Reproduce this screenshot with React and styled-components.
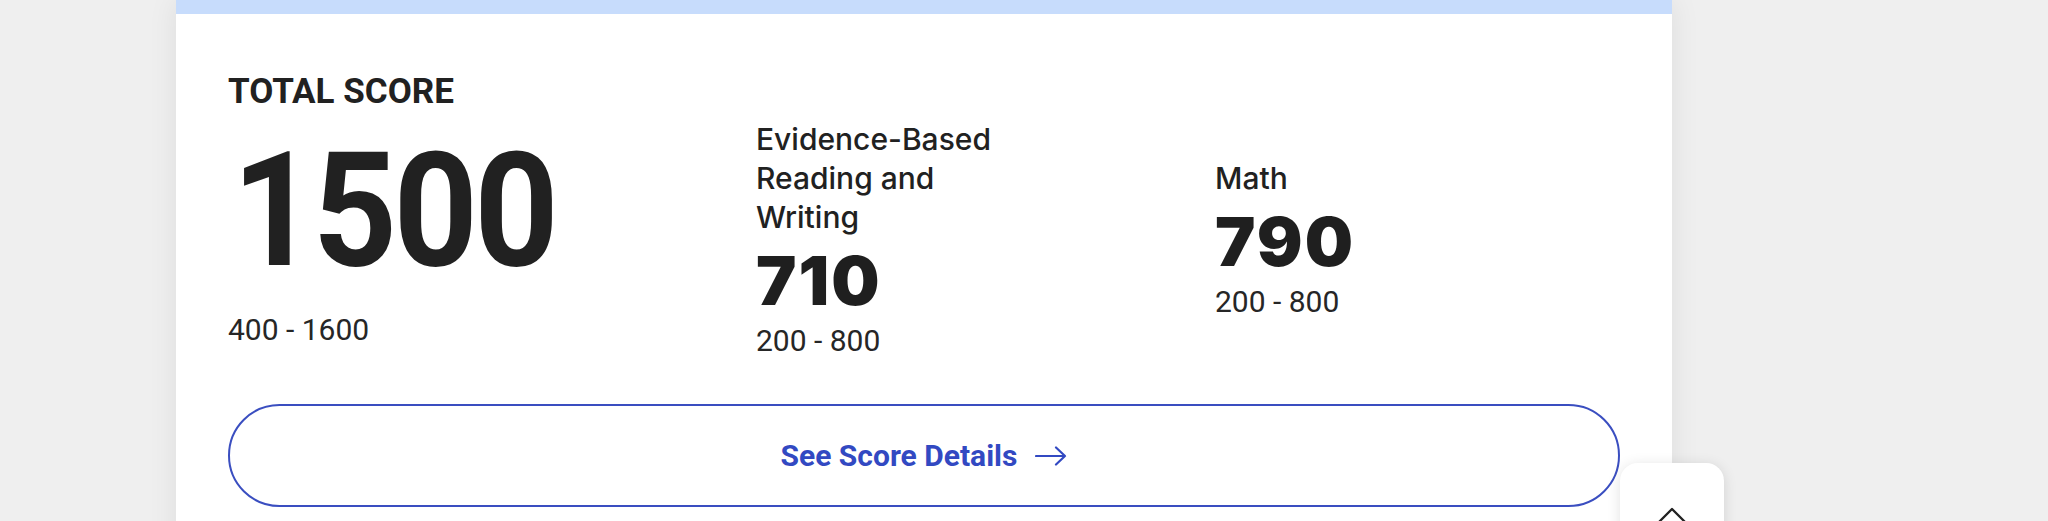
import React from 'react'
import styled, { createGlobalStyle } from 'styled-components';

const GlobalStyle = createGlobalStyle`
  html, body {
    margin: 0;
    padding: 0;
    background: #efefef;
    overflow: hidden;
  }
  body {
    font-family: Roboto, "Liberation Sans", sans-serif;
    color: #212121;
  }
`;

const Page = styled.div`
  height: 521px;
  padding-left: 176px;
  overflow: hidden;
`;

const Card = styled.section`
  width: 1496px;
  min-height: 600px;
  background: #ffffff;
  box-shadow: 0 0 28px rgba(0, 0, 0, 0.08);
`;

const Stripe = styled.div`
  height: 14px;
  background: #c7dcfc;
`;

const Body = styled.div`
  padding: 58px 52px 40px;
`;

const Heading = styled.h2`
  margin: 0;
  font-family: Roboto, sans-serif;
  font-weight: 700;
  font-size: 35px;
  line-height: 40px;
  color: #212121;
`;

const ScoresRow = styled.div`
  display: grid;
  grid-template-columns: 528px 459px 1fr;
  align-items: center;
  margin-top: 8px;
`;

const Column = styled.div`
  display: flex;
  flex-direction: column;
  align-items: flex-start;
  max-width: ${(props) => props.$narrow ? '262px' : 'none'};
`;

// the big number is set a little narrower than plain Roboto Bold
const TotalValue = styled.div`
  font-family: Roboto, sans-serif;
  font-weight: 700;
  font-size: 160px;
  line-height: 160px;
  letter-spacing: -4px;
  margin-left: 4px;
  transform: scaleX(0.92);
  transform-origin: left center;
  color: #212121;
`;

const Label = styled.div`
  font-family: Inter, "Noto Sans", sans-serif;
  font-weight: 500;
  font-size: 30px;
  line-height: 39px;
  color: #212121;
`;

const SectionValue = styled.div`
  margin-top: 9px;
  font-family: Inter, sans-serif;
  font-weight: 900;
  font-size: 68px;
  line-height: 68px;
  letter-spacing: 2px;
  color: #1f1f1f;
`;

const Range = styled.div`
  margin-top: ${(props) => props.$gap || 9}px;
  font-family: Roboto, sans-serif;
  font-weight: 400;
  font-size: 30px;
  line-height: 36px;
  color: #262626;
`;

const DetailsButton = styled.button`
  margin-top: 45px;
  width: 100%;
  height: 103px;
  display: flex;
  align-items: center;
  justify-content: center;
  gap: 18px;
  background: #ffffff;
  border: 2px solid #3a4ec0;
  border-radius: 999px;
  font-family: Roboto, sans-serif;
  font-weight: 700;
  font-size: 30px;
  color: #3249c2;
  cursor: pointer;
`;

const ScrollTop = styled.button`
  position: fixed;
  left: 1620px;
  top: 463px;
  width: 104px;
  height: 104px;
  display: flex;
  align-items: center;
  justify-content: center;
  background: #ffffff;
  border: none;
  border-radius: 18px;
  box-shadow: 0 2px 14px rgba(0, 0, 0, 0.12);
  padding: 0;
`;

const Arrow = () => (
  <svg width="32" height="20" viewBox="0 0 32 20" fill="none">
    <path d="M1 10H30M21 1.5L30 10L21 18.5" stroke="#3249c2" strokeWidth="2.2" strokeLinecap="round" strokeLinejoin="round" />
  </svg>
);

const ChevronUp = () => (
  <svg width="30" height="16" viewBox="0 0 30 16" fill="none">
    <path d="M2 15L15 2L28 15" stroke="#222" strokeWidth="2.4" strokeLinecap="round" strokeLinejoin="round" />
  </svg>
);

const App = () => {
  return (
    <Page>
      <GlobalStyle />
      <Card>
        <Stripe />
        <Body>
          <Heading>TOTAL SCORE</Heading>
          <ScoresRow>
            <Column>
              <TotalValue>1500</TotalValue>
              <Range $gap={21}>400 - 1600</Range>
            </Column>
            <Column $narrow>
              <Label>Evidence-Based Reading and Writing</Label>
              <SectionValue>710</SectionValue>
              <Range>200 - 800</Range>
            </Column>
            <Column>
              <Label>Math</Label>
              <SectionValue>790</SectionValue>
              <Range>200 - 800</Range>
            </Column>
          </ScoresRow>
          <DetailsButton>
            See Score Details <Arrow />
          </DetailsButton>
        </Body>
      </Card>
      <ScrollTop aria-label="Back to top">
        <ChevronUp />
      </ScrollTop>
    </Page>
  )
}

export default App
